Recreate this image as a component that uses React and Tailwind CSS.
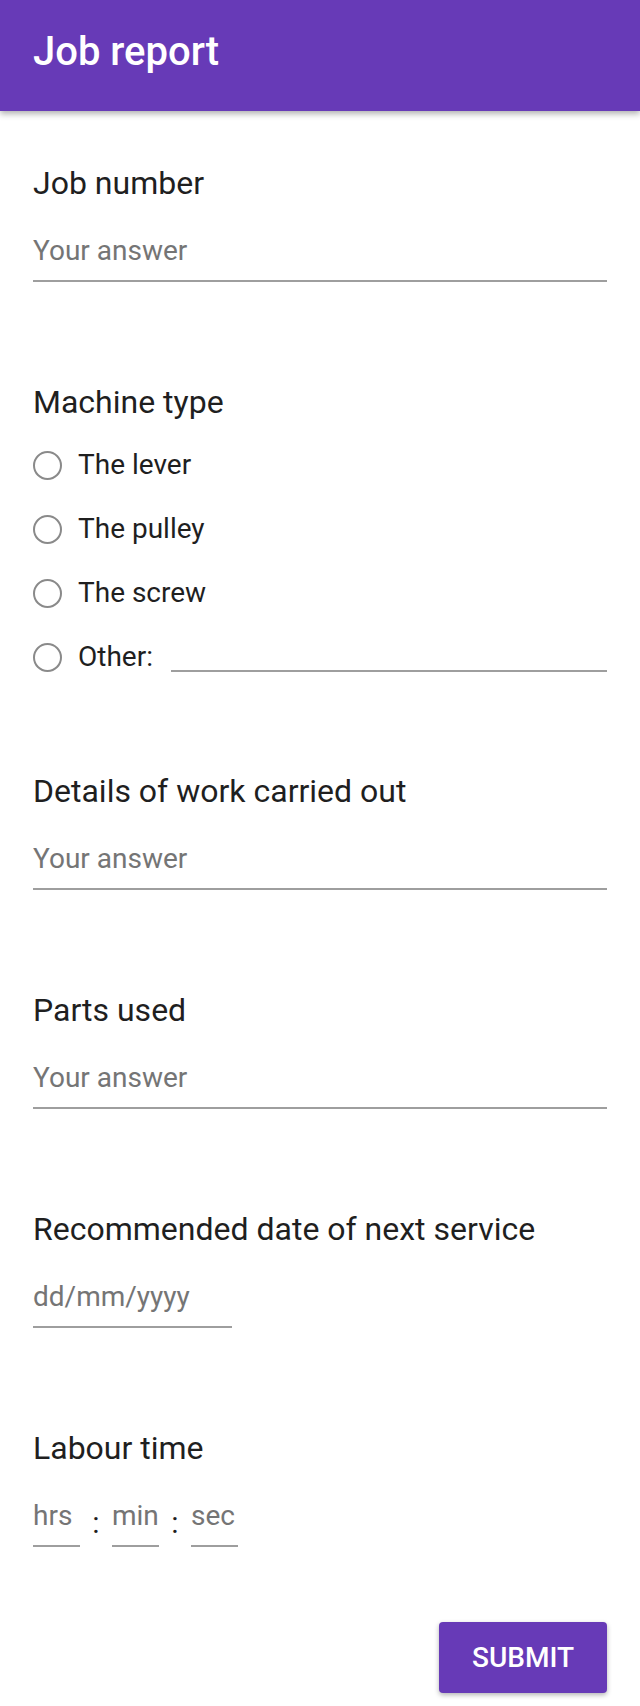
import React from 'react';

const font = { fontFamily: 'Roboto, "Noto Sans", sans-serif' };

const TextQuestion = ({ label, placeholder = 'Your answer', width = 'w-full', last = false }) => (
    <div className={last ? '' : 'mb-[100px]'}>
        <div className="text-[32px] leading-[40px] text-[#1f1f1f]">{label}</div>
        <input
            type="text"
            placeholder={placeholder}
            className={`${width} mt-[30px] block text-[28px] leading-[36px] pb-[11px] border-b-2 border-[#9e9e9e] text-[#202124] placeholder:text-[#757575] outline-none bg-transparent`}
        />
    </div>
);

const Radio = ({ children }) => (
    <label className="flex items-center h-[64px]">
        <span className="w-[29px] h-[29px] rounded-full border-2 border-[#8a8a8a] shrink-0" />
        <span className="ml-[16px] text-[28px] leading-[36px] text-[#1f1f1f]">{children}</span>
    </label>
);

const TimeField = ({ placeholder }) => (
    <input
        type="text"
        placeholder={placeholder}
        className="w-[47px] block text-[28px] leading-[36px] pb-[11px] border-b-2 border-[#9e9e9e] placeholder:text-[#757575] outline-none bg-transparent"
    />
);

const App = () => {
    return (
        <div className="min-h-[1706px] bg-white" style={font}>
            <header className="h-[111px] bg-[#673ab7] px-[33px] pt-[30px] shadow-[0_3px_6px_rgba(0,0,0,0.3)]">
                <h1 className="text-white text-[40px] leading-[44px] font-medium">Job report</h1>
            </header>

            <form className="px-[33px] pt-[52px]" onSubmit={(e) => e.preventDefault()}>
                <TextQuestion label="Job number" />

                {/* multiple choice */}
                <div className="mb-[82px]">
                    <div className="text-[32px] leading-[40px] text-[#1f1f1f]">Machine type</div>
                    <div className="mt-[11px] flex flex-col">
                        <Radio>The lever</Radio>
                        <Radio>The pulley</Radio>
                        <Radio>The screw</Radio>
                        <div className="flex items-center h-[64px]">
                            <span className="w-[29px] h-[29px] rounded-full border-2 border-[#8a8a8a] shrink-0" />
                            <span className="ml-[16px] text-[28px] leading-[36px] text-[#1f1f1f]">Other:</span>
                            <input
                                type="text"
                                className="ml-[18px] flex-1 h-[30px] border-b-2 border-[#9e9e9e] outline-none bg-transparent text-[24px]"
                            />
                        </div>
                    </div>
                </div>

                <TextQuestion label="Details of work carried out" />
                <TextQuestion label="Parts used" />
                <TextQuestion label="Recommended date of next service" placeholder="dd/mm/yyyy" width="w-[199px]" />

                <div>
                    <div className="text-[32px] leading-[40px] text-[#1f1f1f]">Labour time</div>
                    <div className="mt-[30px] flex items-center">
                        <TimeField placeholder="hrs" />
                        <span className="w-[32px] text-center text-[30px] text-[#1f1f1f]">:</span>
                        <TimeField placeholder="min" />
                        <span className="w-[32px] text-center text-[30px] text-[#1f1f1f]">:</span>
                        <TimeField placeholder="sec" />
                    </div>
                </div>

                <div className="mt-[75px] flex justify-end">
                    <button
                        type="submit"
                        className="w-[168px] h-[71px] rounded-[4px] bg-[#673ab7] text-white text-[28px] font-medium shadow-[0_2px_5px_rgba(0,0,0,0.3)]"
                    >
                        SUBMIT
                    </button>
                </div>
            </form>
        </div>
    );
};

export default App;
